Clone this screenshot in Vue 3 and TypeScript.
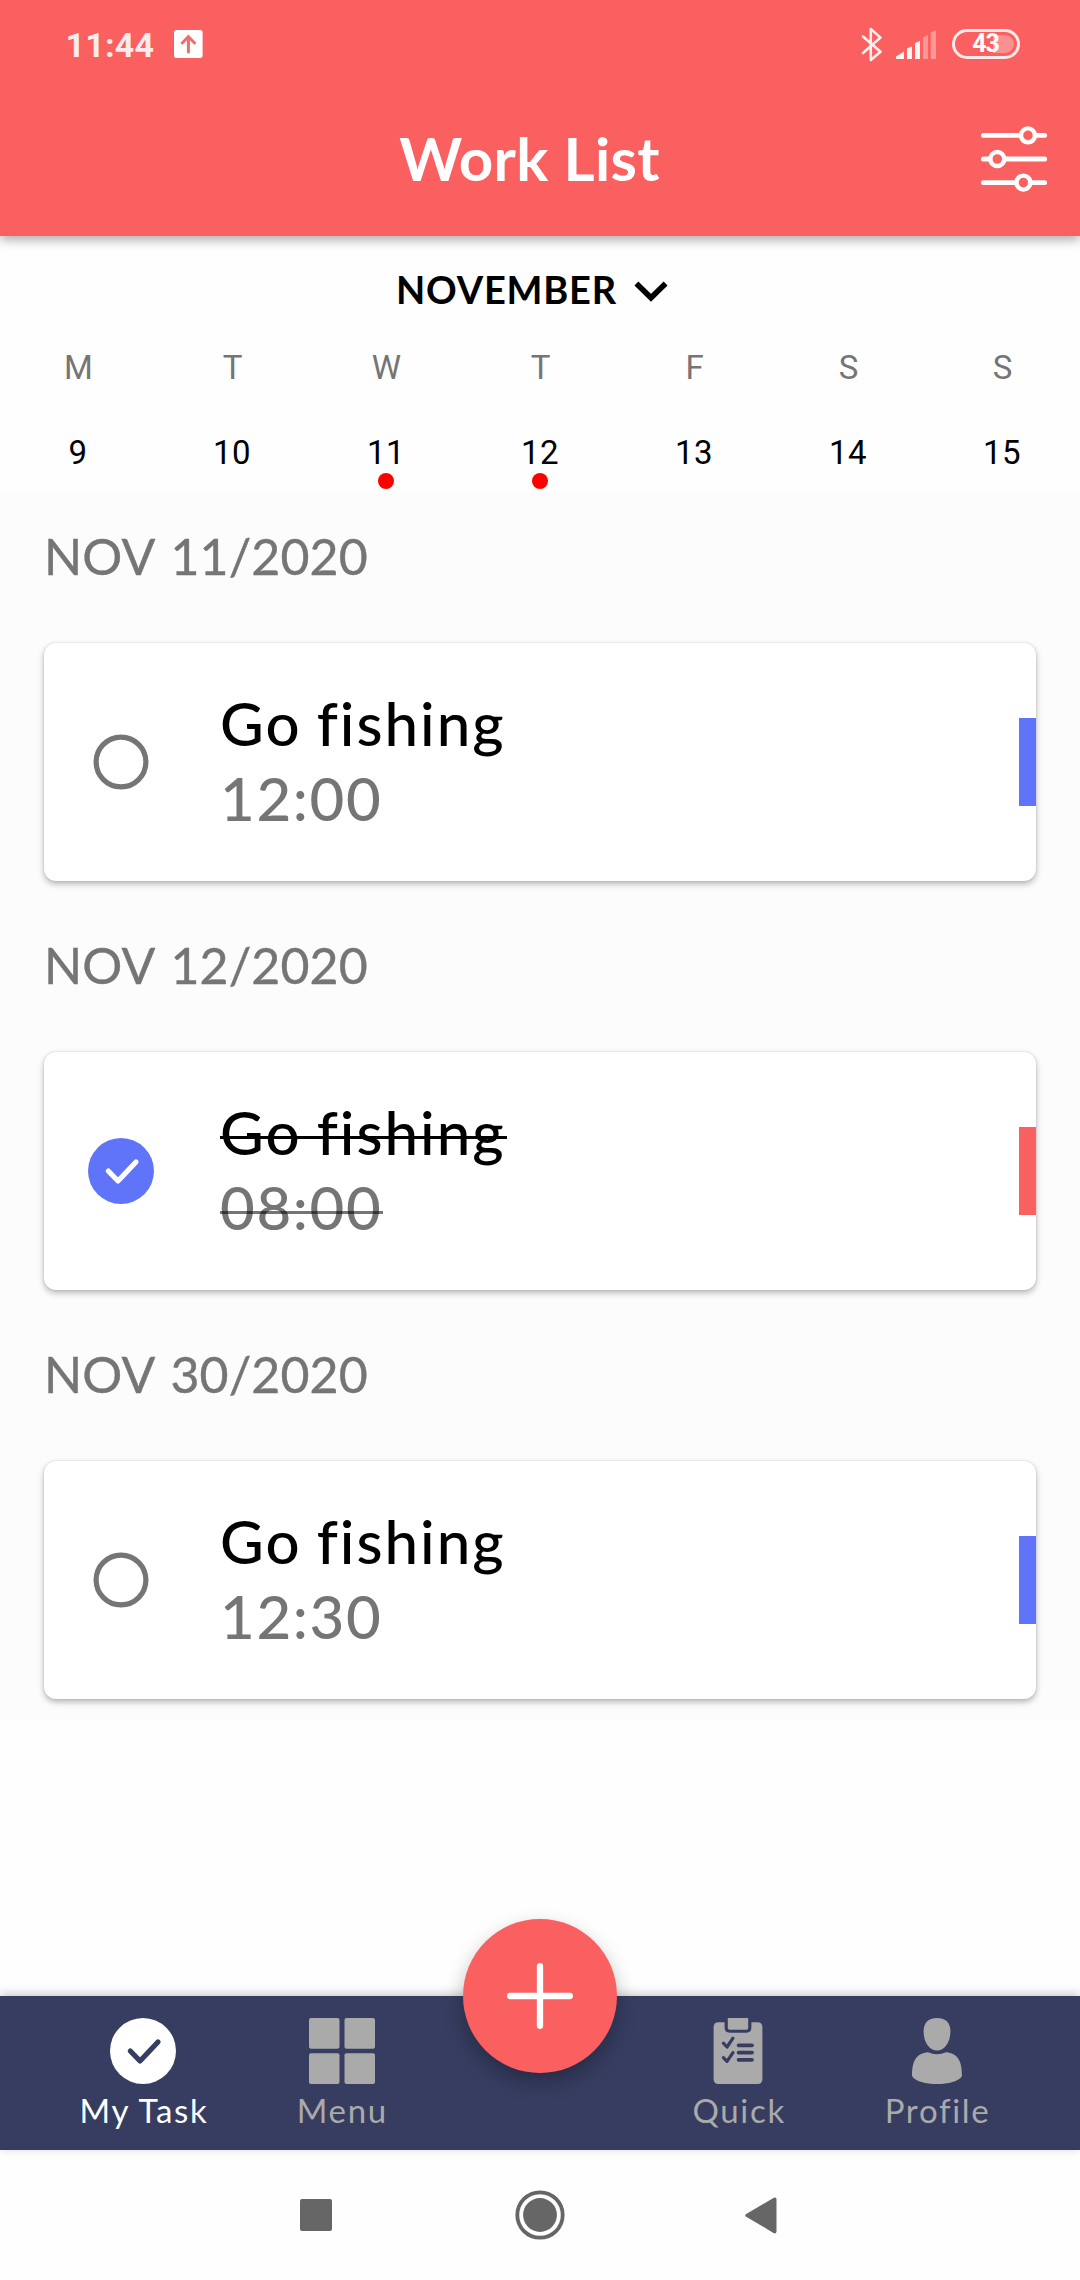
<script setup lang="ts">
interface Day {
  letter: string
  date: number
  marked?: boolean
}

interface Task {
  heading: string
  title: string
  time: string
  done: boolean
  color: string
}

interface Tab {
  id: 'task' | 'menu' | 'add' | 'quick' | 'profile'
  label: string
  active?: boolean
}

const days: Day[] = [
  { letter: 'M', date: 9 },
  { letter: 'T', date: 10 },
  { letter: 'W', date: 11, marked: true },
  { letter: 'T', date: 12, marked: true },
  { letter: 'F', date: 13 },
  { letter: 'S', date: 14 },
  { letter: 'S', date: 15 },
]

const tasks: Task[] = [
  { heading: 'NOV 11/2020', title: 'Go fishing', time: '12:00', done: false, color: '#6074f9' },
  { heading: 'NOV 12/2020', title: 'Go fishing', time: '08:00', done: true, color: '#fa6060' },
  { heading: 'NOV 30/2020', title: 'Go fishing', time: '12:30', done: false, color: '#6074f9' },
]

const tabs: Tab[] = [
  { id: 'task', label: 'My Task', active: true },
  { id: 'menu', label: 'Menu' },
  { id: 'add', label: '' },
  { id: 'quick', label: 'Quick' },
  { id: 'profile', label: 'Profile' },
]
</script>

<template>
  <div class="screen">
    <header class="header">
      <div class="status">
        <span class="clock">11:44</span>
        <svg width="29" height="28" viewBox="0 0 29 28">
          <rect width="28.6" height="28" rx="2.5" fill="#fff" />
          <path d="M14.4 22V6.8M8.2 13L14.4 6.6L20.6 13" fill="none" stroke="#e9706e" stroke-width="3" stroke-linecap="round" />
        </svg>
        <span class="grow"></span>
        <svg class="bluetooth" width="22" height="35" viewBox="0 0 22 35">
          <path d="M2 9.5L19.5 24.8L9.8 33V2L19.5 10.6L2 26" fill="none" stroke="#fff" stroke-opacity=".9" stroke-width="2.6" stroke-linecap="round" stroke-linejoin="round" />
        </svg>
        <svg class="signal" width="40" height="29" viewBox="0 0 40 29">
          <g fill="#fff" fill-opacity=".93">
            <path d="M0 26.5L8 21.5V29H0Z" />
            <path d="M11 18.6L16 16.2V29H11Z" />
            <path d="M19 13.2L24 10.8V29H19Z" />
          </g>
          <g fill="#fff" fill-opacity=".35">
            <path d="M27 7.4L32 5V29H27Z" />
            <path d="M34.8 2.4L40 0V29H34.8Z" />
          </g>
        </svg>
        <span class="battery"><span class="level"></span><b>43</b></span>
      </div>
      <div class="toolbar">
        <h1>Work List</h1>
        <svg class="filter" width="66" height="66" viewBox="0 0 66 66" fill="none" stroke="#fff">
          <path d="M2.3 9.4H39M54 9.4H63.7M2.3 33H9M24 33H63.7M2.3 56.6H35M49 56.6H63.7" stroke-width="4.8" stroke-linecap="round" />
          <circle cx="47" cy="9.4" r="7" stroke-width="4.4" />
          <circle cx="16.3" cy="33" r="7" stroke-width="4.4" />
          <circle cx="42.4" cy="56.6" r="7" stroke-width="4.4" />
        </svg>
      </div>
    </header>

    <section class="calendar">
      <div class="month">
        <span>NOVEMBER</span>
        <svg width="34" height="22" viewBox="0 0 34 22">
          <path d="M2.4 2.6L17 16.8L31.6 2.6" fill="none" stroke="#000" stroke-width="5.6" />
        </svg>
      </div>
      <div class="week">
        <div v-for="day in days" :key="day.date" class="day">
          <span class="letter">{{ day.letter }}</span>
          <span class="date">{{ day.date }}</span>
          <i v-if="day.marked" class="dot"></i>
        </div>
      </div>
    </section>

    <main class="list">
      <section v-for="task in tasks" :key="task.heading" class="group">
        <h2>{{ task.heading }}</h2>
        <article class="card">
          <svg class="check" width="66" height="66" viewBox="0 0 66 66">
            <template v-if="task.done">
              <circle cx="33" cy="33" r="33" fill="#6074f9" />
              <path d="M20.3 33L30 43L48 24" fill="none" stroke="#fff" stroke-width="5.2" stroke-linecap="round" stroke-linejoin="round" />
            </template>
            <circle v-else cx="33" cy="33" r="24.9" fill="none" stroke="#757575" stroke-width="5.2" />
          </svg>
          <div class="text" :class="{ done: task.done }">
            <div class="title"><span>{{ task.title }}</span></div>
            <div class="time"><span>{{ task.time }}</span></div>
          </div>
          <span class="tag" :style="{ background: task.color }"></span>
        </article>
      </section>
    </main>

    <nav class="tabs">
      <div v-for="tab in tabs" :key="tab.id" class="tab" :class="{ active: tab.active }">
        <template v-if="tab.id !== 'add'">
          <svg width="66" height="66" viewBox="0 0 66 66" fill="currentColor">
            <template v-if="tab.id === 'task'">
              <circle cx="33" cy="33" r="33" />
              <path d="M20.3 33L30 43L48 24" fill="none" stroke="#363d60" stroke-width="5.2" stroke-linecap="round" stroke-linejoin="round" />
            </template>
            <template v-else-if="tab.id === 'menu'">
              <rect width="30.5" height="30.7" rx="2" />
              <rect x="35.5" width="30.5" height="30.7" rx="2" />
              <rect y="35.3" width="30.5" height="30.7" rx="2" />
              <rect x="35.5" y="35.3" width="30.5" height="30.7" rx="2" />
            </template>
            <template v-else-if="tab.id === 'quick'">
              <path d="M13.6 4.3H19.6V9.6Q19.6 14.8 24.8 14.8H41.2Q46.4 14.8 46.4 9.6V4.3H52.4Q57.4 4.3 57.4 9.3V61Q57.4 66 52.4 66H13.6Q8.6 66 8.6 61V9.3Q8.6 4.3 13.6 4.3Z" />
              <path d="M22.8 0H43.2V9.8Q43.2 11.8 41.2 11.8H24.8Q22.8 11.8 22.8 9.8Z" />
              <g fill="none" stroke="#363d60" stroke-linecap="round" stroke-linejoin="round">
                <path d="M18.4 25.2L22 29L28 20.2M18.4 39.6L22 43.4L28 34.6" stroke-width="3.2" />
                <path d="M33.6 27.3H47M33.6 34.6H47M33.6 41.8H47" stroke-width="3.8" />
              </g>
            </template>
            <template v-else>
              <path d="M33 0C42 0 46.4 5 46.4 13.5C46.4 25 40 32.6 33 32.6C26 32.6 19.6 25 19.6 13.5C19.6 5 24 0 33 0Z" />
              <path d="M24 34.2Q33 38.4 42 34.2C53.5 35.5 58 42 58 58C55 63.5 44 66 33 66C22 66 11 63.5 8 58C8 42 12.5 35.5 24 34.2Z" />
            </template>
          </svg>
          <span class="label">{{ tab.label }}</span>
        </template>
      </div>
      <button class="fab" aria-label="Add task">
        <svg width="66" height="66" viewBox="0 0 66 66">
          <path d="M33 3.2V62.8M3.2 33H62.8" stroke="#fff" stroke-width="6.3" stroke-linecap="round" />
        </svg>
      </button>
    </nav>

    <footer class="system">
      <span class="recent"></span>
      <svg width="50" height="50" viewBox="0 0 50 50">
        <circle cx="25" cy="25" r="22.7" fill="none" stroke="#666" stroke-width="3.8" />
        <circle cx="25" cy="25" r="16.9" fill="#666" />
      </svg>
      <svg class="back" width="32" height="37" viewBox="0 0 32 37">
        <path d="M1.2 17L28.5 .9Q31.5 -.6 31.5 2.5V34.3Q31.5 37.4 28.5 35.9L1.2 19.8Q-.8 18.4 1.2 17Z" fill="#666" />
      </svg>
    </footer>
  </div>
</template>

<style>
body {
  margin: 0;
  background: #fff;
}
</style>

<style scoped>
.screen {
  width: 1080px;
  height: 2280px;
  display: flex;
  flex-direction: column;
  overflow: hidden;
  background: #fefefe;
  font-family: Lato, 'Liberation Sans', sans-serif;
}

svg {
  display: block;
  flex: none;
}

.header {
  position: relative;
  z-index: 1;
  height: 236px;
  box-sizing: border-box;
  background: #fa6060;
  color: #fff;
  box-shadow: 0 4px 10px rgba(0, 0, 0, 0.32);
}

.status {
  height: 88px;
  display: flex;
  align-items: center;
  padding: 0 60px 0 65.5px;
}

.clock {
  width: 108px;
  padding-top: 1px;
  font: 700 34px/40px Roboto, sans-serif;
  letter-spacing: 0.25px;
  color: rgba(255, 255, 255, 0.88);
}

.grow {
  flex: 1;
}

.signal {
  margin: 0 16px 0 13.5px;
}

.battery {
  position: relative;
  width: 68px;
  height: 30px;
  box-sizing: border-box;
  border: 3px solid rgba(255, 255, 255, 0.87);
  border-radius: 15px;
  display: flex;
  align-items: center;
  justify-content: center;
}

.battery b {
  position: relative;
  padding-right: 1px;
  font: 700 25px/24px Roboto, sans-serif;
  letter-spacing: -1.2px;
}

.level {
  position: absolute;
  right: 3px;
  top: 3px;
  width: 21px;
  height: 18px;
  border-radius: 0 9px 9px 0;
  background: rgba(255, 255, 255, 0.3);
}

.toolbar {
  height: 154px;
  margin-top: -6px;
  display: grid;
  grid-template-columns: 101px 1fr 99px;
  align-items: center;
}

h1 {
  grid-column: 2;
  margin: 0;
  padding: 0 23px 3px 0;
  font-size: 60px;
  line-height: 72px;
  font-weight: 700;
  letter-spacing: 0.3px;
  text-align: center;
}

.calendar {
  height: 257px;
}

.month {
  height: 107px;
  display: flex;
  align-items: center;
  padding-left: 396px;
}

.month span {
  width: 238px;
  margin-top: -2px;
  font-size: 38px;
  line-height: 46px;
  font-weight: 700;
  letter-spacing: 0.8px;
  color: #000;
}

.month svg {
  margin-top: 5px;
}

.week {
  display: grid;
  grid-template-columns: repeat(7, 1fr);
  padding: 0 1px;
  font-family: Roboto, sans-serif;
  font-size: 33px;
}

.day {
  display: flex;
  flex-direction: column;
  align-items: center;
}

.letter {
  padding-left: 1px;
  line-height: 49px;
  color: #757575;
}

.date {
  margin-top: 40px;
  line-height: 41px;
  letter-spacing: 0.4px;
  color: #000;
}

.dot {
  width: 16px;
  height: 16px;
  border-radius: 50%;
  background: #f00;
}

.list {
  flex: none;
  background: #fcfcfc;
}

.group {
  height: 409px;
  padding: 0 44px;
}

h2 {
  margin: 0 0 24px;
  font-size: 50px;
  line-height: 126px;
  font-weight: 400;
  letter-spacing: 0.1px;
  word-spacing: 4px;
  color: #757575;
  -webkit-text-stroke: 0.4px #757575;
}

.card {
  position: relative;
  height: 238px;
  display: flex;
  align-items: center;
  border-radius: 12px;
  background: #fff;
  box-shadow: 0 3px 6px rgba(0, 0, 0, 0.28), 0 0 2px rgba(0, 0, 0, 0.14);
}

.check {
  margin: 0 66px 0 44px;
}

.text {
  flex: 1;
  padding-bottom: 3px;
  font-size: 60px;
  line-height: 75px;
  font-weight: 500;
}

.title {
  color: #000;
  letter-spacing: 2px;
  word-spacing: -2px;
}

.time {
  color: #757575;
  letter-spacing: 1.6px;
}

.text span {
  position: relative;
  display: inline-block;
}

.done span::after {
  content: '';
  position: absolute;
  left: 0;
  right: -1px;
  top: 41px;
  height: 3px;
  background: #000;
}

.done .time span::after {
  background: rgba(0, 0, 0, 0.54);
}

.tag {
  width: 17px;
  height: 88px;
}

.tabs {
  position: relative;
  margin-top: auto;
  flex: none;
  height: 154px;
  box-sizing: border-box;
  padding: 21.7px 44px 0;
  display: grid;
  grid-template-columns: repeat(5, 1fr);
  background: #363d60;
  box-shadow: 0 -2px 9px rgba(0, 0, 0, 0.22);
}

.tab {
  display: flex;
  flex-direction: column;
  align-items: center;
  gap: 6px;
  color: #aaa;
}

.tab.active {
  color: #fff;
}

.label {
  padding-left: 1.5px;
  font-size: 33px;
  line-height: 40px;
  letter-spacing: 1.7px;
  white-space: nowrap;
}

.fab {
  position: absolute;
  left: 463px;
  top: -77px;
  width: 154px;
  height: 154px;
  padding: 0;
  border: 0;
  border-radius: 50%;
  display: flex;
  align-items: center;
  justify-content: center;
  background: #fa6060;
  box-shadow: 0 9px 20px rgba(0, 0, 0, 0.28);
}

.system {
  flex: none;
  height: 130px;
  display: flex;
  align-items: center;
  padding-left: 300px;
  gap: 183px;
  background: #fefefe;
}

.recent {
  width: 32px;
  height: 32px;
  border-radius: 2px;
  background: #666;
}

.back {
  margin-left: -3.5px;
}
</style>
